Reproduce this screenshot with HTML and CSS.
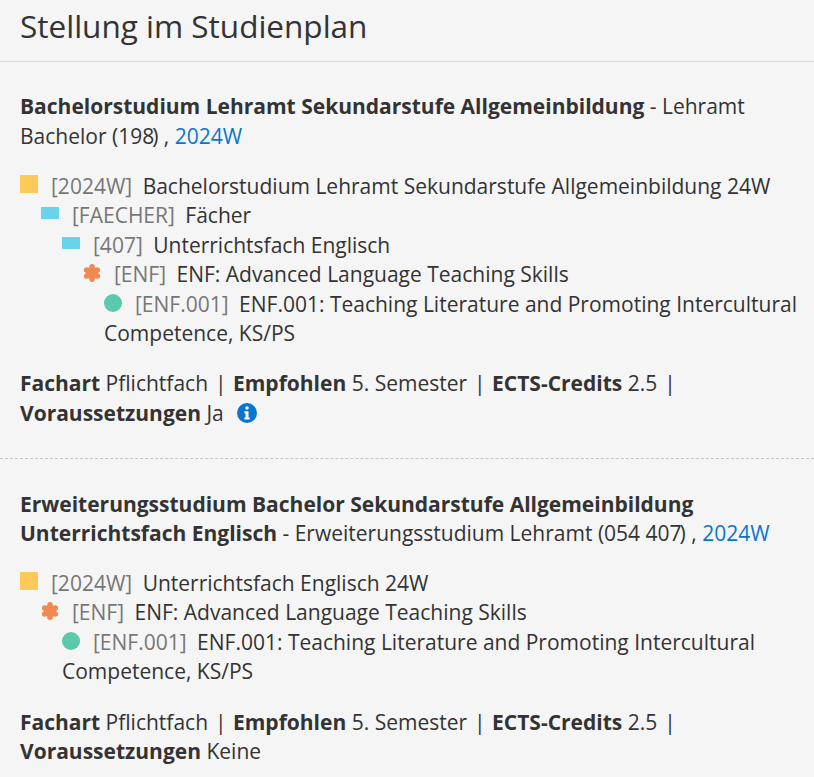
FILE: index.html
```html
<!DOCTYPE html>
<html lang="de">
<head>
<meta charset="utf-8">
<title>Stellung im Studienplan</title>
<link rel="stylesheet" href="styles.css">
</head>
<body>
<h1 class="title">Stellung im Studienplan</h1>
<section class="entry">
  <p class="head"><strong>Bachelorstudium Lehramt Sekundarstufe Allgemeinbildung</strong> - Lehramt Bachelor <span class="num">(198</span>) , <a href="#">2024W</a></p>
  <ul class="tree">
    <li class="node"><span class="ico square"></span><span class="code">[2024W]</span> Bachelorstudium Lehramt Sekundarstufe Allgemeinbildung 24W
      <ul class="tree sub">
        <li class="node"><span class="ico rect"></span><span class="code">[FAECHER]</span> Fächer
          <ul class="tree sub">
            <li class="node"><span class="ico rect"></span><span class="code">[407]</span> Unterrichtsfach Englisch
              <ul class="tree sub">
                <li class="node"><svg class="ico star" viewBox="0 0 18 18"><circle cx="9" cy="9" r="6.4"/><circle cx="9" cy="2.8" r="2.7"/><circle cx="9" cy="15.2" r="2.7"/><circle cx="3.6" cy="5.9" r="2.7"/><circle cx="14.4" cy="5.9" r="2.7"/><circle cx="3.6" cy="12.1" r="2.7"/><circle cx="14.4" cy="12.1" r="2.7"/></svg><span class="code">[ENF]</span> ENF: Advanced Language Teaching Skills
                  <ul class="tree sub">
                    <li class="node"><span class="ico dot"></span><span class="code">[ENF.001]</span> ENF.001: Teaching Literature and Promoting Intercultural Competence, KS/PS</li>
                  </ul>
                </li>
              </ul>
            </li>
          </ul>
        </li>
      </ul>
    </li>
  </ul>
  <p class="meta"><strong>Fachart</strong> Pflichtfach <span class="sep">|</span> <strong>Empfohlen</strong> 5. Semester <span class="sep">|</span> <strong>ECTS-Credits</strong> 2.5 <span class="sep">|</span> <strong>Voraussetzungen</strong> Ja <svg class="info" viewBox="0 0 20 20"><circle cx="10" cy="10" r="10"/><rect class="glyph" x="8.4" y="3.6" width="3.2" height="3" rx="1"/><path class="glyph" d="M7.4 8.3h4.1v6.2h1.1v1.9H7.4v-1.9h1.1v-4.3H7.4z"/></svg></p>
</section>
<section class="entry">
  <p class="head"><strong>Erweiterungsstudium Bachelor Sekundarstufe Allgemeinbildung Unterrichtsfach Englisch</strong> - Erweiterungsstudium Lehramt <span class="num">(054 407</span>) , <a href="#">2024W</a></p>
  <ul class="tree">
    <li class="node"><span class="ico square"></span><span class="code">[2024W]</span> Unterrichtsfach Englisch 24W
      <ul class="tree sub">
        <li class="node"><svg class="ico star" viewBox="0 0 18 18"><circle cx="9" cy="9" r="6.4"/><circle cx="9" cy="2.8" r="2.7"/><circle cx="9" cy="15.2" r="2.7"/><circle cx="3.6" cy="5.9" r="2.7"/><circle cx="14.4" cy="5.9" r="2.7"/><circle cx="3.6" cy="12.1" r="2.7"/><circle cx="14.4" cy="12.1" r="2.7"/></svg><span class="code">[ENF]</span> ENF: Advanced Language Teaching Skills
          <ul class="tree sub">
            <li class="node"><span class="ico dot"></span><span class="code">[ENF.001]</span> ENF.001: Teaching Literature and Promoting Intercultural Competence, KS/PS</li>
          </ul>
        </li>
      </ul>
    </li>
  </ul>
  <p class="meta"><strong>Fachart</strong> Pflichtfach <span class="sep">|</span> <strong>Empfohlen</strong> 5. Semester <span class="sep">|</span> <strong>ECTS-Credits</strong> 2.5 <span class="sep">|</span> <strong>Voraussetzungen</strong> Keine</p>
</section>
</body>
</html>
```
FILE: styles.css
```css
html, body {
  margin: 0;
  padding: 0;
  background: #f5f5f5;
}
body {
  font-family: "Open Sans", sans-serif;
  font-size: 21px;
  line-height: 29.4px;
  color: #333;
  overflow: hidden;
}
.title {
  margin: 0;
  padding: 4px 20px 14px;
  font-size: 31.5px;
  line-height: 43px;
  font-weight: 400;
  border-bottom: 1px solid #d9d9d9;
}
.entry {
  padding: 30.4px 16px 30px 20px;
}
.entry + .entry {
  border-top: 1px dashed #c4c4c4;
}
.head {
  margin: 0 0 20.8px;
}
.entry + .entry .head {
  margin-bottom: 20.6px;
}
strong {
  font-weight: 700;
}
a {
  color: #0a75d1;
  text-decoration: none;
}
.num {
  margin-right: -2px;
}
.tree {
  list-style: none;
  margin: 0;
  padding: 0;
}
.sub {
  padding-left: 21px;
}
.code {
  color: #777;
  margin-right: 5px;
}
.ico {
  display: inline-block;
  margin-right: 13px;
}
.square {
  width: 18px;
  height: 18px;
  background: #fdc959;
  vertical-align: 1px;
}
.rect {
  width: 18px;
  height: 12px;
  background: #68d3ea;
  vertical-align: 4px;
}
.star {
  width: 18px;
  height: 18px;
  fill: #f08a50;
  vertical-align: 0;
}
.dot {
  width: 18px;
  height: 18px;
  border-radius: 50%;
  background: #5bc9ab;
  vertical-align: 0;
}
.sep {
  margin: 0 1px 0 1.5px;
}
.meta {
  margin: 21px 0 0;
}
.info {
  width: 20px;
  height: 20px;
  margin-left: 8px;
  vertical-align: -2px;
  fill: #0a75d1;
}
.info .glyph {
  fill: #fff;
}
```
